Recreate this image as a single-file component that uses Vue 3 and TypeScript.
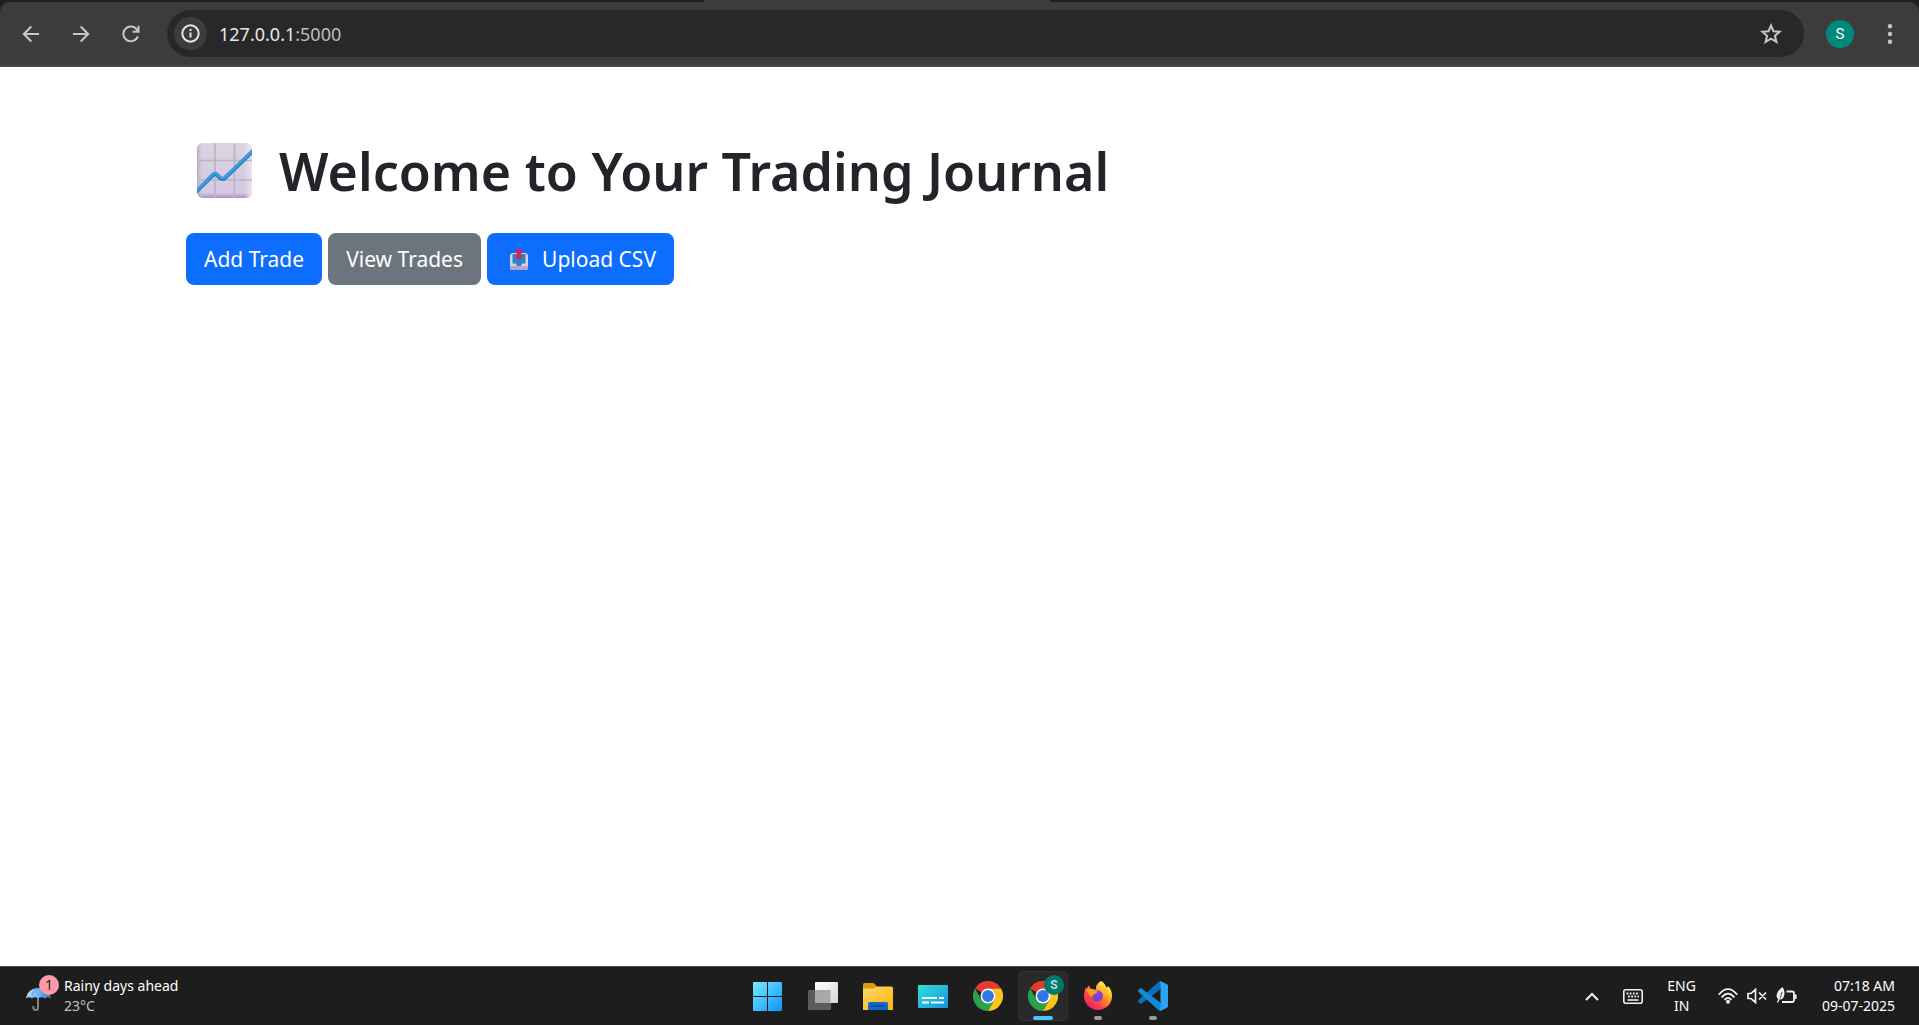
<script setup lang="ts">
import { ref } from 'vue'

interface PageAction {
  label: string
  kind: 'primary' | 'secondary'
  upload?: boolean
}

const actions: PageAction[] = [
  { label: 'Add Trade', kind: 'primary' },
  { label: 'View Trades', kind: 'secondary' },
  { label: 'Upload CSV', kind: 'primary', upload: true },
]

const address = ref('127.0.0.1:5000')
</script>

<template>
  <div class="desktop">
    <header class="toolbar">
      <span class="tab-foot"></span>
      <nav class="nav" aria-label="Navigation">
        <button class="tool" type="button" aria-label="Back">
          <svg width="18" height="18" viewBox="0 0 18 18" fill="none" stroke="#c7c7c7" stroke-width="2">
            <path d="M17 9H2M9.300 1.500 1.800 9l7.500 7.500" />
          </svg>
        </button>
        <button class="tool" type="button" aria-label="Forward">
          <svg width="18" height="18" viewBox="0 0 18 18" fill="none" stroke="#c7c7c7" stroke-width="2">
            <path d="M1 9h15M8.700 1.500 16.200 9l-7.500 7.500" />
          </svg>
        </button>
        <button class="tool" type="button" aria-label="Reload">
          <svg width="18" height="18" viewBox="0 0 18 18" fill="none" stroke="#c7c7c7" stroke-width="2">
            <path d="M15.800 11.300A7.400 7.400 0 1 1 15.300 5.300L16.500 7M16.500 .8V6.700H10.600" />
          </svg>
        </button>
      </nav>
      <div class="omnibox">
        <button class="site" type="button" aria-label="Site information">
          <svg width="19" height="19" viewBox="0 0 19 19" fill="none" stroke="#e6e6e6" stroke-width="2">
            <circle cx="9.500" cy="9.500" r="8.200" />
            <path d="M9.500 8.500v5M9.500 5v2" />
          </svg>
        </button>
        <label class="url">
          <input v-model="address" class="url-input" type="text" aria-label="Address" />
          <span class="url-text" aria-hidden="true">127.0.0.1<span class="port">:5000</span></span>
        </label>
        <button class="tool star" type="button" aria-label="Bookmark">
          <svg width="22" height="22" viewBox="0 0 22 22" fill="none" stroke="#c7c7c7" stroke-width="2">
            <path d="M11 2.500l2.400 5.700 6.300.5-4.800 4.100 1.500 6L11 15.600l-5.400 3.200 1.500-6L2.300 8.700l6.300-.5z" />
          </svg>
        </button>
      </div>
      <button class="avatar" type="button">S</button>
      <button class="tool" type="button" aria-label="Menu">
        <svg width="6" height="20" viewBox="0 0 6 20" fill="#c7c7c7">
          <circle cx="3" cy="2.200" r="2.200" />
          <circle cx="3" cy="10" r="2.200" />
          <circle cx="3" cy="17.800" r="2.200" />
        </svg>
      </button>
    </header>

    <main class="page">
      <div class="container">
        <h1 class="title">
          <svg class="chart" width="56" height="56" viewBox="0 0 56 56" aria-hidden="true">
            <defs>
              <linearGradient id="card" x1="0" y1="0" x2="0" y2="1">
                <stop offset="0" stop-color="#d9d5e0" />
                <stop offset=".9" stop-color="#d5c8e3" />
                <stop offset="1" stop-color="#b18fcb" />
              </linearGradient>
              <linearGradient id="shade" x1="0" y1="0" x2="1" y2="0">
                <stop offset="0" stop-color="#a89caf" stop-opacity=".7" />
                <stop offset=".12" stop-color="#d5cfe0" stop-opacity="0" />
                <stop offset=".85" stop-color="#eee" stop-opacity="0" />
                <stop offset="1" stop-color="#f2e9f5" stop-opacity=".8" />
              </linearGradient>
              <clipPath id="card-clip"><rect width="55" height="55" rx="6" /></clipPath>
            </defs>
            <g clip-path="url(#card-clip)">
              <rect width="55" height="55" fill="url(#card)" />
              <rect width="55" height="55" fill="url(#shade)" />
              <path d="M18 0v55M37.500 0v55M0 17.500h55M0 37h55" stroke="#bbb3c2" stroke-width="1.600" />
              <path d="M-2 50 16 32q2-2 4 0l3 3q2.500 2 5 0L57 7" fill="none" stroke="#2c7fc0" stroke-width="4" />
              <path d="M-2 49 16 31q2-2 4 0l3 3q2.500 2 5 0L57 6" fill="none" stroke="#3b9ce0" stroke-width="2.600" />
            </g>
          </svg>
          <span>Welcome to Your Trading Journal</span>
        </h1>
        <div class="actions">
          <a v-for="a in actions" :key="a.label" href="#" class="btn" :class="a.kind">
            <svg v-if="a.upload" class="tray" width="20" height="22" viewBox="0 0 20 22" aria-hidden="true">
              <path d="M3 5h14l2 2v13q0 2-2 2H3q-2 0-2-2V7z" fill="#d8cfe2" />
              <path d="M1 18h18v2q0 2-2 2H3q-2 0-2-2z" fill="#b7a3cf" />
              <path d="M3.500 6h13v9.500h-3.500l-1 2.500H8l-1-2.500H3.500z" fill="#2f80c4" />
              <path d="M10 0l4.500 5h-2.300v6H7.800V5H5.500z" fill="#dc1f55" />
            </svg>
            <span>{{ a.label }}</span>
          </a>
        </div>
      </div>
    </main>

    <footer class="taskbar">
      <button class="weather" type="button">
        <span class="weather-icon">
          <svg width="26" height="24" viewBox="0 0 26 24" aria-hidden="true">
            <defs>
              <linearGradient id="umb" x1="0" y1="0" x2="1" y2="0">
                <stop offset="0" stop-color="#b5dcfb" />
                <stop offset=".5" stop-color="#6bb4f5" />
                <stop offset="1" stop-color="#1f7fe0" />
              </linearGradient>
            </defs>
            <path d="M12 10v10.500q0 2.500-2.300 2.500T7.300 20.500V19" fill="none" stroke="#858585" stroke-width="2" />
            <path d="M0 11.500C1 5 6 1 12 1s12 4 13 10.500q-3-2.500-6 0-3.500-2.500-7 0-3.500-2.500-6 0-3-2.500-6 0z" fill="url(#umb)" />
            <path d="M12 1Q6 4 6 11M12 1q6 3 7 10" fill="none" stroke="#4b98dc" stroke-width=".7" />
          </svg>
          <span class="badge">1</span>
        </span>
        <span class="stack left">
          <span>Rainy days ahead</span>
          <span class="muted">23°C</span>
        </span>
      </button>

      <div class="apps">
        <button class="app" type="button" aria-label="Start">
          <svg width="30" height="30" viewBox="0 0 30 30">
            <defs>
              <linearGradient id="win" x1="0" y1="0" x2="1" y2="1">
                <stop offset="0" stop-color="#78eaff" />
                <stop offset="1" stop-color="#0c94fb" />
              </linearGradient>
            </defs>
            <path d="M1 1H14V15H0V2Q0 1 1 1zM15 1H28Q29 1 29 2V15H15zM0 16H14V30H1Q0 30 0 29zM15 16H29V29Q29 30 28 30H15z" fill="url(#win)" />
          </svg>
        </button>
        <button class="app" type="button" aria-label="Task view">
          <svg width="30" height="28" viewBox="0 0 30 28">
            <defs>
              <linearGradient id="tv" x1="0" y1="0" x2="1" y2="1">
                <stop offset="0" stop-color="#fff" />
                <stop offset="1" stop-color="#d7d7d7" />
              </linearGradient>
            </defs>
            <rect y="8" width="23" height="20" rx="1" fill="#5c5c5c" />
            <rect x="7" width="23" height="21" rx="1" fill="url(#tv)" />
            <path d="M7 8h15.500v13H7z" fill="#a8a8a8" />
          </svg>
        </button>
        <button class="app" type="button" aria-label="File Explorer">
          <svg width="30" height="27" viewBox="0 0 30 27">
            <defs>
              <linearGradient id="fold" x1="0" y1="0" x2="1" y2="1">
                <stop offset="0" stop-color="#ffd86b" />
                <stop offset="1" stop-color="#fcb40c" />
              </linearGradient>
            </defs>
            <path d="M0 1.500Q0 0 1.500 0H10q1 0 1.500.7L14 4v5H0z" fill="#dc9a08" />
            <path d="M0 5.500h9.500q1 0 2-.8t2-1.200H28.500Q30 3.500 30 5v22H0z" fill="url(#fold)" />
            <path d="M5 27v-6q0-2 2-2h16q2 0 2 2v6z" fill="#0d6cc8" />
            <path d="M8 23h14" stroke="#0a4790" stroke-width="1.400" />
          </svg>
        </button>
        <button class="app" type="button" aria-label="Widgets">
          <svg width="30" height="24" viewBox="0 0 30 24">
            <defs>
              <linearGradient id="cap" x1="0" y1="0" x2="1" y2="1">
                <stop offset="0" stop-color="#2fe3d4" />
                <stop offset="1" stop-color="#1690e4" />
              </linearGradient>
            </defs>
            <rect width="30" height="23" y="1" rx="1" fill="url(#cap)" />
            <path d="M4 14h15M21 14h5M4 18.500h7M13 18.500h13" stroke="#f4fbff" stroke-width="2" />
          </svg>
        </button>
        <button v-for="n in 2" :key="n" class="app" :class="{ active: n === 2 }" type="button" aria-label="Chrome">
          <svg width="30" height="30" viewBox="0 0 30 30">
            <path d="M15 15 2 7.500A15 15 0 0 1 28 7.500H15z" fill="#e33b2e" />
            <path d="M2 7.500A15 15 0 0 0 15 30L21.500 18.800 15 15 8.500 18.800z" fill="#2ba14b" />
            <path d="M28 7.500A15 15 0 0 1 15 30L21.500 18.800 21.500 11 15 7.500z" fill="#fcc31e" />
            <circle cx="15" cy="15" r="7.500" fill="#fff" />
            <circle cx="15" cy="15" r="5.900" fill="#2f76ea" />
          </svg>
          <span v-if="n === 2" class="profile">S</span>
          <span v-if="n === 2" class="running wide"></span>
        </button>
        <button class="app" type="button" aria-label="Firefox">
          <svg width="30" height="30" viewBox="0 0 30 30">
            <defs>
              <linearGradient id="fox" x1=".8" y1=".1" x2=".2" y2=".9">
                <stop offset="0" stop-color="#fff14a" />
                <stop offset=".4" stop-color="#ff9a24" />
                <stop offset=".7" stop-color="#ff4a3c" />
                <stop offset="1" stop-color="#ee1d72" />
              </linearGradient>
              <linearGradient id="globe" x1="1" y1="0" x2="0" y2="1">
                <stop offset="0" stop-color="#a03be0" />
                <stop offset="1" stop-color="#5b47d8" />
              </linearGradient>
            </defs>
            <path d="M18.500 0c2.500 2 4.500 4.500 4.800 6.500 1-.2 1.500-.8 1.700-1.500C28 8 29.300 11.500 29 16c-.6 7.500-6.500 13-14 13S1.200 23 1 15.500C1 11 2 8 3 6l.5 2C4.500 6 5.500 5 6 4.500L7.500 8c2-.3 3.500 0 5 .5C13 4 15.500 1 18.500 0z" fill="url(#fox)" />
            <path d="M12 3 13 8.500 9.500 8.500Q10 5 12 3z" fill="#1d1d1d" />
            <circle cx="14.500" cy="15" r="5.600" fill="url(#globe)" />
            <path d="M3.500 9C6 7 10 7.500 12.500 9.500q2 .5 2 1.500-.5 1.500-3 2-2.500 1-2.500 3.500Q5 13 3.500 9z" fill="#ff9a22" />
          </svg>
          <span class="running"></span>
        </button>
        <button class="app" type="button" aria-label="Visual Studio Code">
          <svg width="30" height="30" viewBox="0 0 100 100">
            <path d="M75 27.300 12.200 75c-1.600 1.300-3.800 1.200-5.300-.2l-5.500-5c-1.800-1.700-1.800-4.500 0-6.200L68.700 2.200 78 1z" fill="#0a70b8" />
            <path d="M75 72.700 12.200 25c-1.600-1.200-3.800-1.100-5.300.2l-5.500 5c-1.800 1.700-1.800 4.500 0 6.200L68.700 97.800 78 99z" fill="#128bd6" />
            <path d="M70.900 99.300c1.600.6 3.400.6 5-.2L96.500 89.200c2.200-1 3.500-3.200 3.500-5.600V16.400c0-2.400-1.400-4.600-3.500-5.600L75.900.9c-2.100-1-4.900-.6-6.900 1.300 2.200-2 6-.5 6 2.600v90.400c0 3.100-3.800 4.600-6 2.600z" fill="#2aa5f2" />
          </svg>
          <span class="running"></span>
        </button>
      </div>

      <div class="tray-area">
        <button class="tool chevron" type="button" aria-label="Show hidden icons">
          <svg width="14" height="9" viewBox="0 0 14 9" fill="none" stroke="#f0f0f0" stroke-width="2">
            <path d="M1 8l6-6 6 6" />
          </svg>
        </button>
        <button class="tool keyboard" type="button" aria-label="Touch keyboard">
          <svg width="20" height="15" viewBox="0 0 20 15" fill="none" stroke="#f0f0f0">
            <rect x=".8" y=".8" width="18.400" height="13.400" rx="2" stroke-width="1.600" />
            <path d="M3.500 4.500h13M5 7.500h11" stroke-width="1.800" stroke-dasharray="1.800 1.400" />
            <path d="M4.500 11h11" stroke-width="1.600" />
          </svg>
        </button>
        <button class="stack center lang" type="button">
          <span>ENG</span>
          <span>IN</span>
        </button>
        <button class="tool status" type="button" aria-label="Network, volume and battery">
          <svg width="20" height="16" viewBox="0 0 20 16" fill="none" stroke="#f0f0f0" stroke-width="1.800">
            <path d="M.8 6.800Q10-4.500 19.200 6.800M3.600 9.500Q10 1.800 16.400 9.500M6.500 12Q10 7.800 13.500 12" />
            <circle cx="10" cy="13.700" r="2" fill="#f0f0f0" stroke="none" />
          </svg>
          <svg width="20" height="16" viewBox="0 0 20 16" fill="none" stroke="#f0f0f0" stroke-width="1.700">
            <path d="M1 5.500h3L8.500 1.500v13L4 10.500H1zM12 4.500l7 7M19 4.500l-7 7" />
          </svg>
          <svg width="21" height="18" viewBox="0 0 21 18" fill="none" stroke="#f0f0f0" stroke-width="1.800">
            <path d="M10.500 4.500H16q2 0 2 2V13q0 2-2 2H6" />
            <path d="M19.500 7.500v4.500" stroke-width="2.200" />
            <path d="M6.500 0C8.500 3 9 6 8 9q-1 3.500-4 3.500Q.5 12 .5 8.500.5 4.500 6.500 0z" fill="#f0f0f0" stroke="none" />
            <path d="M6 5 4.500 10 2 15" stroke="#1d1d1d" stroke-width=".8" />
            <path d="M3.500 11 1.500 15.500" stroke-width="1.400" />
          </svg>
        </button>
        <button class="stack right" type="button">
          <span>07:18 AM</span>
          <span>09-07-2025</span>
        </button>
      </div>
    </footer>
  </div>
</template>

<style>
body {
  margin: 0;
}
</style>

<style scoped>
.desktop {
  display: flex;
  flex-direction: column;
  min-height: 100vh;
  background: #fff;
  font-family: 'Segoe UI', 'Noto Sans', sans-serif;
}

svg {
  display: block;
  flex: none;
}

button {
  padding: 0;
  border: 0;
  background: none;
  color: inherit;
  font: inherit;
}

.toolbar {
  position: relative;
  display: flex;
  align-items: center;
  box-sizing: border-box;
  height: 67px;
  padding: 2px 26px 0 22px;
  border-bottom: 2px solid #484546;
  background: #3c3c3c;
  border-radius: 10px 10px 0 0;
  box-shadow: inset 0 2px #1f2020, 0 -10px 0 10px #1f2020;
}

.tab-foot {
  position: absolute;
  top: 0;
  left: 704px;
  width: 346px;
  height: 2px;
  background: #3c3c3c;
}

.nav {
  display: flex;
  gap: 32px;
  margin-right: 27px;
}

.tool {
  display: flex;
  align-items: center;
}

.omnibox {
  display: flex;
  flex: 1;
  align-items: center;
  box-sizing: border-box;
  height: 47px;
  padding: 0 22px 0 7px;
  border-radius: 24px;
  background: #282828;
}

.site {
  display: flex;
  align-items: center;
  justify-content: center;
  width: 33px;
  height: 33px;
  border-radius: 50%;
  background: #3c3c3c;
}

.url {
  position: relative;
  flex: 1;
  margin-left: 12px;
  font-size: 18px;
  line-height: 24px;
}

.url-input {
  position: absolute;
  inset: 0;
  width: 100%;
  padding: 0;
  border: 0;
  background: none;
  color: transparent;
  font: inherit;
}

.url-text {
  color: #e8e8e8;
}

.port {
  color: #bdbdbd;
}

.avatar {
  width: 28px;
  height: 28px;
  margin: 0 33px 0 22px;
  border-radius: 50%;
  background: #00897b;
  color: #fff;
  font-family: Roboto, sans-serif;
  font-size: 15px;
}

.page {
  flex: 1;
}

.container {
  max-width: 1547px;
  margin: 0 auto;
  padding: 70px 20px 0;
}

@media (min-width: 1600px) {
  .container {
    padding: 70px 0 0;
  }
}

.title {
  display: flex;
  align-items: center;
  gap: 26px;
  margin: 0 0 28px 11px;
  color: #212529;
  font-size: 52px;
  font-weight: 600;
  line-height: 68px;
}

.actions {
  display: flex;
  gap: 6px;
}

.btn {
  display: flex;
  align-items: center;
  gap: 13px;
  height: 52px;
  padding: 0 18px;
  border-radius: 8px;
  color: #fff;
  font-size: 21px;
  text-decoration: none;
}

.primary {
  background: #0d6efd;
}

.secondary {
  background: #6c757d;
}

.tray {
  margin-left: 4px;
}

.taskbar {
  display: grid;
  grid-template-columns: 1fr auto 1fr;
  align-items: center;
  box-sizing: border-box;
  height: 59px;
  padding: 0 24px 0 26px;
  border-top: 1px solid #4a4a4a;
  background: #1d1d1d;
  color: #fff;
  font-size: 14px;
}

.weather {
  display: flex;
  align-items: center;
  gap: 12px;
  justify-self: start;
}

.weather-icon {
  position: relative;
  margin-top: 5px;
}

.badge {
  position: absolute;
  top: -12px;
  left: 13px;
  width: 20px;
  height: 20px;
  border-radius: 50%;
  background: #ff99a4;
  color: #1d1d1d;
  line-height: 20px;
  text-align: center;
}

.stack {
  display: flex;
  flex-direction: column;
  line-height: 20px;
}

.left {
  align-items: flex-start;
}

.center {
  align-items: center;
}

.right {
  align-items: flex-end;
}

.muted {
  color: #c0c0c0;
}

.apps {
  display: flex;
  gap: 5px;
}

.app {
  position: relative;
  display: flex;
  align-items: center;
  justify-content: center;
  width: 50px;
  height: 50px;
  border-radius: 5px;
}

.active {
  background: #292929;
  box-shadow: inset 0 0 0 1px #333;
}

.profile {
  position: absolute;
  top: 4px;
  right: 4px;
  width: 20px;
  height: 20px;
  border-radius: 50%;
  background: #00796b;
  color: #b2dfdb;
  font-family: Roboto, sans-serif;
  font-size: 12px;
  font-weight: 700;
  line-height: 20px;
}

.running {
  position: absolute;
  bottom: 1px;
  left: 21px;
  width: 8px;
  height: 4px;
  border-radius: 2px;
  background: #9a9a9a;
}

.wide {
  left: 15px;
  width: 20px;
  background: #4cc2ff;
}

.tray-area {
  display: flex;
  align-items: center;
  justify-self: end;
}

.chevron,
.keyboard {
  margin-right: 24px;
}

.lang {
  margin-right: 22px;
}

.status {
  gap: 9px;
  margin-right: 25px;
}
</style>
